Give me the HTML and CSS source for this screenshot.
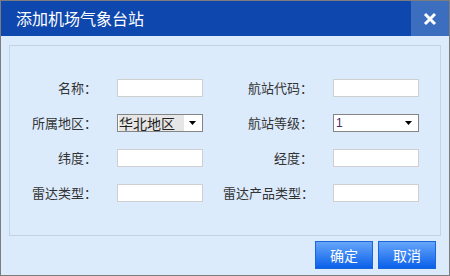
FILE: index.html
```html
<!DOCTYPE html>
<html lang="zh-CN">
  <head>
    <meta charset="UTF-8" />
    <title>添加机场气象台站</title>
    <link rel="stylesheet" href="styles.css">
  </head>
  <body>
    <div class="dialog">
      <div class="dialog-head">
        <span class="dialog-title">添加机场气象台站</span>
        <span class="dialog-close">
          <svg width="14" height="14" viewBox="0 0 14 14">
            <path d="M2 2 L12 12 M12 2 L2 12" stroke="#fff" stroke-width="3" />
          </svg>
        </span>
      </div>
      <div class="dialog-body">
        <div class="panel">
          <div class="form-grid">
            <label class="label">名称：</label>
            <input class="field" type="text" />
            <label class="label">航站代码：</label>
            <input class="field" type="text" />

            <label class="label">所属地区：</label>
            <div class="select">
              <span class="select-value picked">华北地区</span>
              <svg class="arrow" width="7" height="4" viewBox="0 0 7 4"><path d="M0 0 H7 L3.5 4 Z" fill="#000" /></svg>
            </div>
            <label class="label">航站等级：</label>
            <div class="select">
              <span class="select-value level">1</span>
              <svg class="arrow" width="7" height="4" viewBox="0 0 7 4"><path d="M0 0 H7 L3.5 4 Z" fill="#000" /></svg>
            </div>

            <label class="label">纬度：</label>
            <input class="field" type="text" />
            <label class="label">经度：</label>
            <input class="field" type="text" />

            <label class="label">雷达类型：</label>
            <input class="field" type="text" />
            <label class="label">雷达产品类型：</label>
            <input class="field" type="text" />
          </div>
        </div>
        <div class="dialog-foot">
          <button class="btn">确定</button>
          <button class="btn">取消</button>
        </div>
      </div>
    </div>
  </body>
</html>
```

FILE: styles.css
```css
body {
  margin: 0;
  padding: 0;
  background: #fff;
  font-family: "Noto Sans CJK SC", "Liberation Sans", sans-serif;
}

.dialog {
  width: 450px;
  height: 276px;
  box-sizing: border-box;
  border: 1px solid #7c7c7c;
  background: #dcebfc;
  display: flex;
  flex-direction: column;
}

.dialog-head {
  height: 35px;
  background: #0e47ad;
  display: flex;
  align-items: center;
}

.dialog-title {
  flex: 1;
  padding-left: 15px;
  color: #fff;
  font-size: 16px;
  line-height: 35px;
}

.dialog-close {
  width: 38px;
  height: 35px;
  background: #3c6ec0;
  display: flex;
  align-items: center;
  justify-content: center;
}

.dialog-body {
  flex: 1;
  padding: 9px 8px 6px;
  display: flex;
  flex-direction: column;
}

.panel {
  height: 191px;
  box-sizing: border-box;
  border: 1px solid #c2d3e6;
}

.form-grid {
  display: grid;
  grid-template-columns: 87px 86px 90px 86px;
  grid-auto-rows: 18px;
  column-gap: 20px;
  row-gap: 17px;
  align-items: center;
  padding-top: 33px;
}

.label {
  text-align: right;
  font-size: 13px;
  color: #333;
  line-height: 18px;
  white-space: nowrap;
}

.field {
  width: 86px;
  height: 18px;
  box-sizing: border-box;
  margin: 0;
  padding: 0 2px;
  border: 1px solid #cfcfcf;
  background: #fff;
  outline: none;
}

.select {
  width: 86px;
  height: 18px;
  box-sizing: border-box;
  border: 1px solid #858585;
  background: #fff;
  display: flex;
  align-items: center;
  padding-left: 1px;
}

.select-value {
  flex: 1;
  font-size: 14px;
  line-height: 16px;
  color: #222;
}

.select-value.picked {
  flex: none;
  width: 65px;
  background: #e6e6e6;
}

.select-value.level {
  font-family: "Liberation Sans", sans-serif;
  font-size: 12px;
  color: #4a2a6a;
  padding-left: 1px;
}

.arrow {
  margin-left: auto;
  margin-right: 6px;
}

.dialog-foot {
  display: flex;
  justify-content: flex-end;
  gap: 5px;
  padding-top: 5px;
  padding-right: 5px;
}

.btn {
  width: 58px;
  height: 28px;
  margin: 0;
  padding: 0;
  border: 1px solid #1a66d8;
  background: linear-gradient(#66a6fb, #0a60ea);
  color: #fff;
  font-family: "Noto Sans CJK SC", sans-serif;
  font-size: 14px;
  cursor: pointer;
}
```
